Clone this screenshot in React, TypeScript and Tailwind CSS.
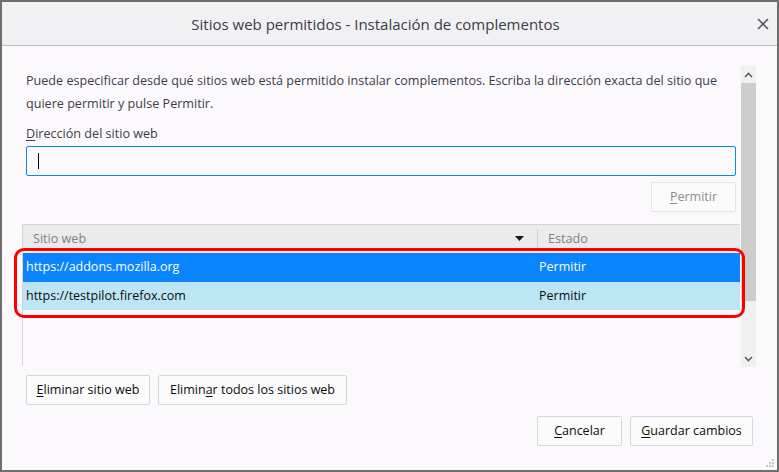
import React from "react";

const font = { fontFamily: '"Open Sans", "Noto Sans", sans-serif' };

const Btn = ({ children, className = "", disabled = false }: { children: React.ReactNode; className?: string; disabled?: boolean }) => (
  <button
    className={
      "h-[30px] rounded-[2px] border bg-[#fbfbfb] text-[12.5px] " +
      (disabled ? "border-[#e4e4e6] text-[#8c8c8e] " : "border-[#d7d7db] text-[#0c0c0d] ") +
      className
    }
  >
    {children}
  </button>
);

const App = () => {
  return (
    <div
      className="w-[779px] h-[472px] border-2 border-[#6e6e6e] bg-[#fbf9fc] flex flex-col relative overflow-hidden"
      style={font}
    >
      {/* title bar */}
      <div className="h-[44px] shrink-0 bg-[#f1f0f3] border-b border-[#bdbdbd] flex items-center justify-center relative pr-[28px]">
        <span className="text-[15px] text-[#3a3d48] pt-[2px]">Sitios web permitidos - Instalación de complementos</span>
        <svg className="absolute right-[8px] top-[16px]" width="12" height="12" viewBox="0 0 12 12">
          <path d="M1 1 L11 11 M11 1 L1 11" stroke="#5a5d66" strokeWidth="1.6" />
        </svg>
      </div>

      {/* main */}
      <div className="flex pt-[20px] pl-[20px]">
        <div className="w-[718px] flex flex-col relative">
          <p className="px-[4px] pt-[3px] text-[12.6px] leading-[23px] text-[#3b3e49] whitespace-nowrap">
            Puede especificar desde qué sitios web está permitido instalar complementos. Escriba la dirección exacta del sitio que
            <br />
            quiere permitir y pulse Permitir.
          </p>
          <label className="px-[4px] mt-[10px] text-[12.6px] leading-[18px] text-[#3b3e49]">
            <span className="underline underline-offset-2">D</span>irección del sitio web
          </label>
          <div className="mx-[4px] mt-[3px] h-[30px] rounded-[2px] border border-[#0a84ff] bg-[#fbf9fc] flex items-center pl-[11px]">
            <div className="w-px h-[16px] bg-black" />
          </div>
          <div className="flex justify-end mr-[4px] mt-[6px]">
            <Btn disabled className="w-[85px]">
              <span className="underline underline-offset-2">P</span>ermitir
            </Btn>
          </div>

          {/* tree */}
          <div className="mt-[12px] h-[142px] border-l border-t border-[#d4d4d4] flex flex-col">
            <div className="h-[28px] bg-[#ebebeb] flex items-center text-[12.6px] text-[#818181]">
              <div className="w-[514px] pl-[10px] flex items-center justify-between pr-[13px]">
                <span>Sitio web</span>
                <svg width="9" height="5" viewBox="0 0 9 5">
                  <path d="M0 0 L9 0 L4.5 5 Z" fill="#1a1a1a" />
                </svg>
              </div>
              <div className="w-px h-[20px] bg-[#cfcfcf]" />
              <span className="pl-[10px]">Estado</span>
            </div>
            <div className="h-[29px] bg-[#0a84ff] text-white flex items-center text-[12.5px]">
              <span className="w-[516px] pl-[3px]">https://addons.mozilla.org</span>
              <span>Permitir</span>
            </div>
            <div className="h-[28px] bg-[#bde6f4] text-[#0c0c0d] flex items-center text-[12.5px]">
              <span className="w-[516px] pl-[3px]">https://testpilot.firefox.com</span>
              <span>Permitir</span>
            </div>
          </div>

          {/* red annotation */}
          <div className="absolute left-[-8px] top-[182px] w-[731px] h-[70px] border-[3px] border-[#ff0000] rounded-[10px] pointer-events-none" />
        </div>

        {/* scrollbar */}
        <div className="ml-px w-[15px] h-[301px] bg-[#f0f0f0] flex flex-col">
          <div className="h-[17px] flex items-center justify-center">
            <svg width="9" height="6" viewBox="0 0 9 6">
              <path d="M1 5 L4.5 1.5 L8 5" stroke="#606060" strokeWidth="1.6" fill="none" />
            </svg>
          </div>
          <div className="h-[218px] bg-[#cdcdcb]" />
          <div className="flex-1 flex items-end justify-center pb-[5px]">
            <svg width="9" height="6" viewBox="0 0 9 6">
              <path d="M1 1 L4.5 4.5 L8 1" stroke="#606060" strokeWidth="1.6" fill="none" />
            </svg>
          </div>
        </div>
      </div>

      {/* bottom buttons */}
      <div className="flex gap-[8px] pl-[24px] mt-[8px]">
        <Btn className="w-[124px]">
          <span className="underline underline-offset-2">E</span>liminar sitio web
        </Btn>
        <Btn className="w-[189px]">
          Elimin<span className="underline underline-offset-2">a</span>r todos los sitios web
        </Btn>
      </div>
      <div className="flex justify-end gap-[8px] pr-[24px] mt-[11px]">
        <Btn className="w-[85px]">
          <span className="underline underline-offset-2">C</span>ancelar
        </Btn>
        <Btn className="w-[123px]">
          <span className="underline underline-offset-2">G</span>uardar cambios
        </Btn>
      </div>

      {/* resize grip */}
      <svg className="absolute right-[2px] bottom-[2px]" width="10" height="10" viewBox="0 0 10 10">
        <rect x="7" y="1" width="2" height="2" fill="#c8c8c8" />
        <rect x="4" y="4" width="2" height="2" fill="#c8c8c8" />
        <rect x="7" y="4" width="2" height="2" fill="#c8c8c8" />
        <rect x="1" y="7" width="2" height="2" fill="#c8c8c8" />
        <rect x="4" y="7" width="2" height="2" fill="#c8c8c8" />
        <rect x="7" y="7" width="2" height="2" fill="#c8c8c8" />
      </svg>
    </div>
  );
};

export default App;
